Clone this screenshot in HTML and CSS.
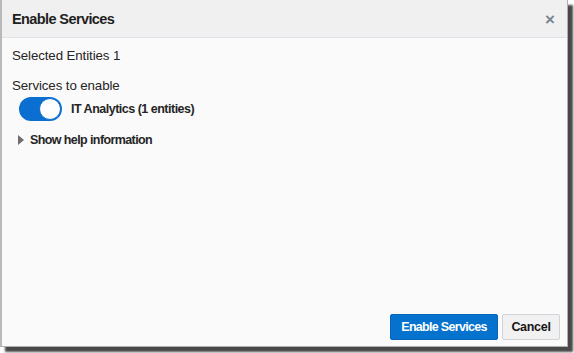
FILE: index.html
```html
<!DOCTYPE html>
<html>
<head>
<meta charset="utf-8">
<link rel="stylesheet" href="styles.css">
</head>
<body>
<div class="dialog">
  <div class="header">
    <div class="title">Enable Services</div>
    <div class="close">×</div>
  </div>
  <div class="content">
    <div class="line">Selected Entities 1</div>
    <div class="line services-label">Services to enable</div>
    <div class="service">
      <span class="toggle"><span class="knob"></span></span>
      <span class="service-name">IT Analytics (1 entities)</span>
    </div>
    <div class="help">
      <span class="tri"></span>
      <span>Show help information</span>
    </div>
  </div>
  <div class="footer">
    <button class="btn primary">Enable Services</button>
    <button class="btn secondary">Cancel</button>
  </div>
</div>
</body>
</html>
```
FILE: styles.css
```css
html, body {
  margin: 0;
  padding: 0;
  background: #ffffff;
}
body {
  width: 574px;
  height: 353px;
  overflow: hidden;
  font-family: "Liberation Sans", Arial, sans-serif;
  color: #252525;
}
.dialog {
  width: 568px;
  height: 347px;
  box-sizing: border-box;
  border-left: 2px solid #b9b9b9;
  border-right: 1px solid #b0b0b0;
  border-bottom: 1px solid #b0b0b0;
  background: #fafafa;
  box-shadow: 5px 5px 2px #484848;
  display: flex;
  flex-direction: column;
}
.header {
  height: 38px;
  box-sizing: border-box;
  background: #f0f0f0;
  border-bottom: 1px solid #dde3e8;
  display: flex;
  align-items: center;
  justify-content: space-between;
  padding: 0 12px 0 10px;
}
.title {
  font-size: 14.5px;
  letter-spacing: -0.6px;
  font-weight: bold;
  color: #1f1f1f;
}
.close {
  font-size: 17px;
  font-weight: bold;
  color: #7a8592;
  line-height: 1;
  margin-top: 2px;
}
.content {
  flex: 1;
  padding: 10px 0 0 10px;
  font-size: 13.3px;
  letter-spacing: -0.1px;
}
.line {
  line-height: 16px;
}
.services-label {
  margin-top: 14px;
}
.service {
  display: flex;
  align-items: center;
  margin-top: 3px;
  margin-left: 7px;
}
.toggle {
  width: 43px;
  height: 24px;
  border-radius: 12px;
  background: #0a6fd0;
  position: relative;
  flex: none;
}
.knob {
  position: absolute;
  right: 1px;
  top: 1px;
  width: 22px;
  height: 22px;
  box-sizing: border-box;
  border-radius: 50%;
  background: #ffffff;
  border: 1px solid #0a6fd0;
}
.service-name {
  font-weight: bold;
  font-size: 12.5px;
  letter-spacing: -0.5px;
  margin-left: 9px;
}
.help {
  display: flex;
  align-items: center;
  margin-top: 12px;
  margin-left: 6px;
  font-weight: bold;
  font-size: 12.5px;
  letter-spacing: -0.6px;
}
.tri {
  width: 0;
  height: 0;
  border-top: 5px solid transparent;
  border-bottom: 5px solid transparent;
  border-left: 6px solid #6f6f6f;
  margin-right: 6px;
}
.footer {
  display: flex;
  justify-content: flex-end;
  gap: 4px;
  padding: 0 7px 6px 0;
}
.btn {
  font-family: "Liberation Sans", Arial, sans-serif;
  font-size: 12.5px;
  font-weight: bold;
  height: 26px;
  border-radius: 2px;
  padding: 0;
  margin: 0;
  white-space: nowrap;
}
.primary {
  background: #0572ce;
  color: #ffffff;
  border: 1px solid #0565b8;
  width: 108px;
  letter-spacing: -0.7px;
}
.secondary {
  background: #f1f1f1;
  color: #161616;
  border: 1px solid #cfd4d8;
  width: 58px;
  letter-spacing: -0.3px;
}
```
